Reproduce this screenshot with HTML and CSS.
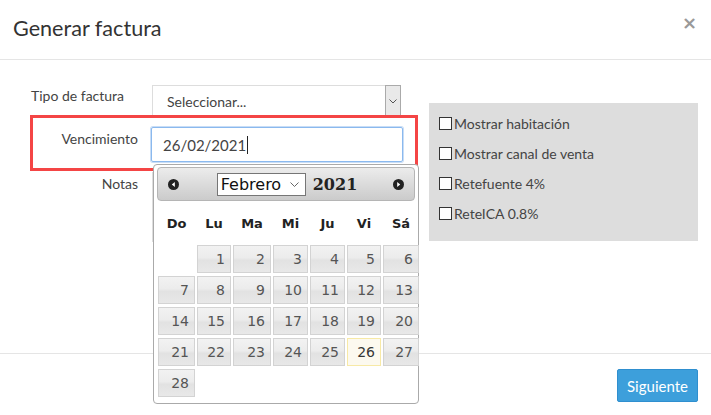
FILE: index.html
```html
<!DOCTYPE html>
<html lang="es">
<head>
    <meta charset="UTF-8">
    <meta name="viewport" content="width=device-width, initial-scale=1.0">
    <title>Generar factura</title>
    <link rel="stylesheet" href="styles.css">
</head>
<body>
    <div class="modal">
        <div class="modal-header">
            <h4 class="modal-title">Generar factura</h4>
            <button type="button" class="close">&times;</button>
        </div>

        <div class="modal-body">
            <div class="form-fields">
                <label class="field-label label-left">Tipo de factura</label>
                <div class="fake-select">
                    <span>Seleccionar...</span>
                    <span class="select-arrow">
                        <svg width="8" height="5" viewBox="0 0 8 5"><path d="M0.5 0.5 L4 4 L7.5 0.5" fill="none" stroke="#555" stroke-width="1"/></svg>
                    </span>
                </div>

                <label class="field-label">Vencimiento</label>
                <div class="date-input">26/02/2021<span class="caret"></span></div>

                <label class="field-label">Notas</label>
                <div class="notes"></div>
            </div>

            <div class="options-panel">
                <label class="check-row"><span class="checkbox"></span>Mostrar habitación</label>
                <label class="check-row"><span class="checkbox"></span>Mostrar canal de venta</label>
                <label class="check-row"><span class="checkbox"></span>Retefuente 4%</label>
                <label class="check-row"><span class="checkbox"></span>ReteICA 0.8%</label>
            </div>

            <div class="highlight-box"></div>
        </div>

        <div class="modal-footer">
            <button type="button" class="btn-primary">Siguiente</button>
        </div>

        <!-- datepicker popup, opened from the Vencimiento field -->
        <div class="datepicker">
            <div class="dp-header">
                <span class="dp-nav">
                    <svg width="11" height="11" viewBox="0 0 11 11"><circle cx="5.5" cy="5.5" r="5.5" fill="#222"/><path d="M6.8 3 L3.8 5.5 L6.8 8 Z" fill="#fff"/></svg>
                </span>
                <div class="dp-title">
                    <div class="month-select">
                        <span>Febrero</span>
                        <svg width="9" height="5" viewBox="0 0 9 5"><path d="M0.5 0.5 L4.5 4.5 L8.5 0.5" fill="none" stroke="#666" stroke-width="1"/></svg>
                    </div>
                    <span class="dp-year">2021</span>
                </div>
                <span class="dp-nav">
                    <svg width="11" height="11" viewBox="0 0 11 11"><circle cx="5.5" cy="5.5" r="5.5" fill="#222"/><path d="M4.2 3 L7.2 5.5 L4.2 8 Z" fill="#fff"/></svg>
                </span>
            </div>

            <div class="dp-grid dp-weekdays">
                <span>Do</span><span>Lu</span><span>Ma</span><span>Mi</span><span>Ju</span><span>Vi</span><span>Sá</span>
            </div>

            <div class="dp-grid dp-days" id="days"></div>
        </div>
    </div>

    <script>
        const days = document.getElementById('days');
        const firstWeekday = 1; // febrero 2021 empieza en lunes
        const selected = 26;

        for (let i = 0; i < firstWeekday; i++) {
            days.appendChild(document.createElement('span'));
        }

        for (let d = 1; d <= 28; d++) {
            const cell = document.createElement('a');
            cell.className = d === selected ? 'day day-active' : 'day';
            cell.textContent = d;
            days.appendChild(cell);
        }
    </script>
</body>
</html>
```

FILE: styles.css
```css
body {
    margin: 0;
    font-family: Lato, "Open Sans", sans-serif;
    color: #333;
    background: #fff;
}

.modal {
    position: relative;
    width: 711px;
    height: 415px;
    overflow: hidden;
}

.modal-header {
    height: 59px;
    display: flex;
    align-items: center;
    justify-content: space-between;
    padding: 0 13px;
    border-bottom: 1px solid #e5e5e5;
}

.modal-title {
    margin: 0;
    font-size: 21.6px;
    font-weight: normal;
    color: #333;
    margin-top: -4px;
}

.close {
    border: 0;
    background: none;
    padding: 0;
    font-family: "DejaVu Sans", sans-serif;
    font-size: 18px;
    font-weight: bold;
    color: #999;
    margin-top: -14px;
    margin-right: 1px;
}

.modal-body {
    position: relative;
    height: 293px;
    display: flex;
    justify-content: space-between;
    padding: 25px 13px 0 31px;
    box-sizing: border-box;
}

.form-fields {
    width: 372px;
    display: grid;
    grid-template-columns: 121px 1fr;
    grid-auto-rows: min-content;
    row-gap: 10px;
    align-items: start;
}

.field-label {
    font-size: 14px;
    color: #444;
    text-align: right;
    padding-right: 14px;
    padding-top: 3px;
}

.label-left {
    text-align: left;
    padding-top: 2px;
}

.fake-select {
    width: 249px;
    height: 32px;
    box-sizing: border-box;
    border: 1px solid #ddd;
    display: flex;
    align-items: center;
    justify-content: space-between;
    font-size: 14px;
    color: #444;
    padding-left: 14px;
}

.select-arrow {
    width: 16px;
    height: 32px;
    box-sizing: border-box;
    margin-right: -1px;
    background: #e9e9e9;
    border: 1px solid #aaa;
    display: flex;
    align-items: center;
    justify-content: center;
}

.date-input {
    width: 252px;
    height: 35px;
    margin-left: -1px;
    box-sizing: border-box;
    border: 1px solid #8bb9ee;
    box-shadow: 0 0 0 1px #c8ddf6;
    border-radius: 2px;
    font-size: 15px;
    color: #444;
    display: flex;
    align-items: center;
    padding-left: 11px;
}

.caret {
    width: 1px;
    height: 18px;
    background: #222;
    margin-left: 1px;
}

.notes {
    width: 249px;
    height: 70px;
    box-sizing: border-box;
    border: 1px solid #ddd;
}

.options-panel {
    width: 269px;
    height: 138px;
    margin-top: 18px;
    background: #ddd;
    padding: 12px 10px;
    box-sizing: border-box;
    display: flex;
    flex-direction: column;
    gap: 13px;
}

.check-row {
    display: flex;
    align-items: center;
    font-size: 14px;
    color: #444;
    height: 17px;
}

.checkbox {
    width: 11px;
    height: 11px;
    border: 1px solid #333;
    background: #fff;
    margin-right: 2px;
}

.highlight-box {
    position: absolute;
    left: 30px;
    top: 55px;
    width: 388px;
    height: 56px;
    box-sizing: border-box;
    border: 3px solid #f44545;
}

.modal-footer {
    border-top: 1px solid #e5e5e5;
    display: flex;
    justify-content: flex-end;
    padding: 15px 13px;
}

.btn-primary {
    width: 81px;
    height: 33px;
    background: #3d9fdb;
    border: 1px solid #2f8fcf;
    border-radius: 2px;
    color: #fff;
    font-family: Lato, sans-serif;
    font-size: 15px;
    padding: 0;
}

/* datepicker */
.datepicker {
    position: absolute;
    left: 153px;
    top: 164px;
    width: 266px;
    height: 240px;
    box-sizing: border-box;
    border: 1px solid #aaa;
    border-radius: 4px;
    background: #fff;
    padding: 2px 0 0 3px;
    font-family: "DejaVu Sans", Verdana, sans-serif;
}

.dp-header {
    width: 258px;
    height: 34px;
    box-sizing: border-box;
    border: 1px solid #b5b5b5;
    border-radius: 4px;
    background: linear-gradient(#ececec, #cbcbcb);
    display: flex;
    align-items: center;
    justify-content: space-between;
    padding: 0 10px 0 10px;
}

.dp-nav {
    display: flex;
}

.dp-title {
    display: flex;
    align-items: center;
    gap: 7px;
    margin-left: 2px;
}

.month-select {
    width: 89px;
    height: 23px;
    box-sizing: border-box;
    border: 1px solid #767676;
    background: #fff;
    display: flex;
    align-items: center;
    justify-content: space-between;
    padding: 0 6px 0 3px;
    font-size: 16px;
    color: #111;
}

.dp-year {
    font-family: "DejaVu Serif", serif;
    font-weight: bold;
    font-size: 16px;
    color: #222;
}

.dp-grid {
    display: grid;
    grid-template-columns: 37px 34px 38px 35px 35px 34px 36px;
    column-gap: 2px;
    margin-left: 1px;
}

.dp-weekdays {
    height: 44px;
    align-items: center;
    font-weight: bold;
    font-size: 13px;
    color: #222;
    text-align: center;
}

.dp-days {
    grid-auto-rows: 28px;
    row-gap: 3px;
}

.day {
    box-sizing: border-box;
    border: 1px solid #d3d3d3;
    background: linear-gradient(#f2f2f2 0, #ececec 45%, #e2e2e2 55%, #e8e8e8 100%);
    color: #555;
    font-size: 14px;
    text-align: right;
    padding: 5px 5px 0 0;
}

.day-active {
    border-color: #f7e9a6;
    background: #fcf9ef;
    color: #363636;
}
```
